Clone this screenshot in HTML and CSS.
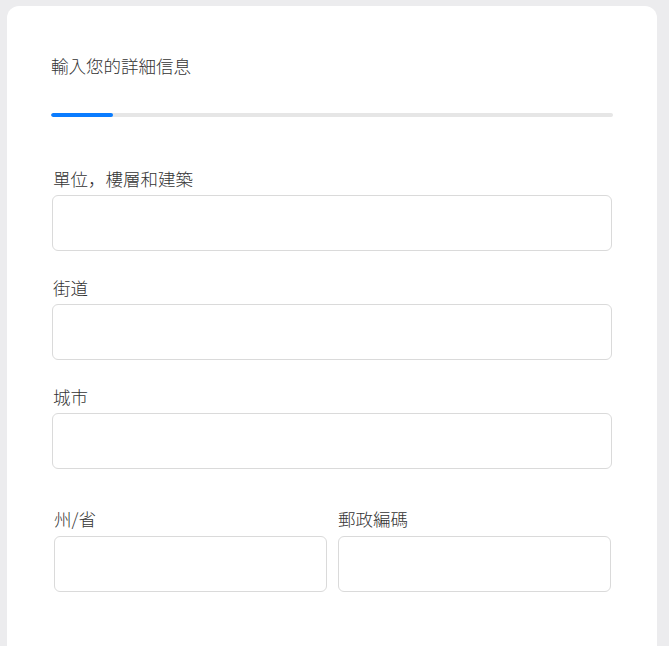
FILE: index.html
```html
<!DOCTYPE html>
<html>

<head>
  <title>輸入您的詳細信息</title>

  <link rel="stylesheet" href="styles.css">
</head>

<body>
  <div class="card">
    <h1 class="card-title">輸入您的詳細信息</h1>

    <!-- Step progress -->
    <div class="progress-track">
      <div class="progress-bar" style="width: 11%"></div>
    </div>

    <form class="address-form">
      <div class="field">
        <label for="unit">單位，樓層和建築</label>
        <input type="text" id="unit" />
      </div>

      <div class="field">
        <label for="street">街道</label>
        <input type="text" id="street" />
      </div>

      <div class="field">
        <label for="city">城市</label>
        <input type="text" id="city" />
      </div>

      <div class="field-row">
        <div class="field">
          <label for="state">州/省</label>
          <input type="text" id="state" />
        </div>
        <div class="field">
          <label for="postcode">郵政編碼</label>
          <input type="text" id="postcode" />
        </div>
      </div>
    </form>
  </div>
</body>

</html>
```

FILE: styles.css
```css
* {
  margin: 0;
  padding: 0;
  box-sizing: border-box;
}

:root {
  --primary: #0a7cff;
  --track: #e6e6e6;
  --border: #dadada;
  --text: #333;
}

body {
  font-family: "Noto Sans CJK JP", "Noto Sans CJK TC", "Noto Sans", sans-serif;
  background-color: #ececee;
  color: var(--text);
}

.card {
  width: 650px;
  min-height: 640px;
  margin: 6px 0 0 7px;
  padding: 48px 44px 0;
  background-color: #fff;
  border-radius: 12px 12px 0 0;
}

.card-title {
  font-size: 17.5px;
  font-weight: 300;
  line-height: 24px;
}

.progress-track {
  margin-top: 35px;
  height: 4px;
  background-color: var(--track);
  border-radius: 2px;
  overflow: hidden;
}

.progress-bar {
  height: 100%;
  background-color: var(--primary);
  border-radius: 2px;
}

.address-form {
  margin-top: 50px;
  padding: 0 1px;
}

.field label {
  display: block;
  font-size: 17.5px;
  font-weight: 300;
  line-height: 24px;
  margin-bottom: 4px;
  padding-left: 1px;
}

.field input {
  display: block;
  width: 100%;
  height: 56px;
  margin-bottom: 25px;
  border: 1px solid var(--border);
  border-radius: 6px;
  font: inherit;
  padding: 0 12px;
}

.field-row {
  display: grid;
  grid-template-columns: 1fr 1fr;
  gap: 11px;
  margin: 38px 1px 0 2px;
}

.field-row .field input {
  margin-bottom: 0;
}

.field-row .field label {
  padding-left: 0;
  margin-bottom: 5px;
}
```
